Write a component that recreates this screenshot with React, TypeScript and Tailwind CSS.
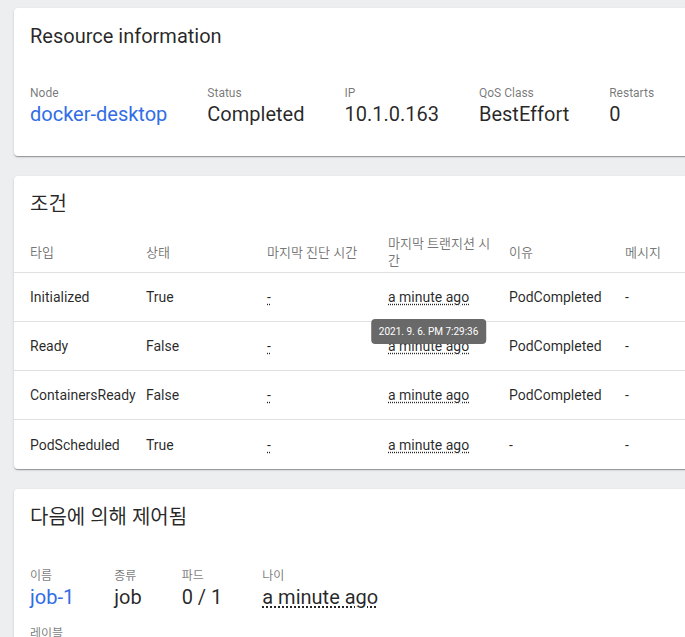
const font = { fontFamily: '"Roboto", "Noto Sans CJK KR", sans-serif' }

interface Condition {
  type: string
  status: string
  reason: string
}

const conditions: Condition[] = [
  { type: 'Initialized', status: 'True', reason: 'PodCompleted' },
  { type: 'Ready', status: 'False', reason: 'PodCompleted' },
  { type: 'ContainersReady', status: 'False', reason: 'PodCompleted' },
  { type: 'PodScheduled', status: 'True', reason: '-' },
]

const cardCls =
  'w-[720px] bg-white rounded-[4px] shadow-[0_2px_1px_-1px_rgba(0,0,0,0.2),0_1px_1px_0_rgba(0,0,0,0.14),0_1px_3px_0_rgba(0,0,0,0.12)]'

function Field({ label, children }: { label: string; children: React.ReactNode }) {
  return (
    <div className="flex flex-col shrink-0">
      <span className="text-[12px] leading-4 text-black/55">{label}</span>
      <span className="text-[20px] leading-[26px] text-black/85">{children}</span>
    </div>
  )
}

function CardTitle({ children }: { children: React.ReactNode }) {
  return <h2 className="text-[20px] leading-8 text-black/85">{children}</h2>
}

export default function App() {
  return (
    <div className="w-[685px] h-[637px] overflow-hidden bg-[#edeef0] pl-[14px] pt-2" style={font}>
      <div className="flex flex-col gap-5">
        {/* Resource information */}
        <div className={`${cardCls} px-4 pt-3 pb-[29px]`}>
          <CardTitle>Resource information</CardTitle>
          <div className="flex gap-10 mt-[33px]">
            <Field label="Node">
              <span className="text-[#326de6]">docker-desktop</span>
            </Field>
            <Field label="Status">Completed</Field>
            <Field label="IP">10.1.0.163</Field>
            <Field label="QoS Class">BestEffort</Field>
            <Field label="Restarts">0</Field>
          </div>
        </div>

        {/* Conditions */}
        <div className={`${cardCls} pt-3 overflow-hidden`}>
          <div className="px-4">
            <CardTitle>조건</CardTitle>
          </div>
          <div className="mt-3 flex h-[41px] items-center border-b border-[#e0e0e0] px-4 text-[13px] leading-[17px] text-black/55">
            <div className="w-[116px] shrink-0">타입</div>
            <div className="w-[121px] shrink-0">상태</div>
            <div className="w-[121px] shrink-0">마지막 진단 시간</div>
            <div className="w-[121px] shrink-0 pr-3">마지막 트랜지션 시간</div>
            <div className="w-[116px] shrink-0">이유</div>
            <div className="w-[116px] shrink-0">메시지</div>
          </div>
          {conditions.map((c, i) => (
            <div
              key={c.type}
              className={`flex h-[49px] items-center px-4 text-[14px] leading-5 text-black/85 ${
                i < conditions.length - 1 ? 'border-b border-[#e0e0e0]' : ''
              }`}
            >
              <div className="w-[116px] shrink-0">{c.type}</div>
              <div className="w-[121px] shrink-0">{c.status}</div>
              <div className="w-[121px] shrink-0">
                <span className="underline decoration-dotted underline-offset-2">-</span>
              </div>
              <div className="w-[121px] shrink-0">
                <span className="relative underline decoration-dotted underline-offset-2">
                  a minute ago
                  {i === 0 && (
                    <span className="absolute left-1/2 top-[30px] z-10 -translate-x-1/2 whitespace-nowrap rounded-[4px] bg-[#616161]/95 px-2 text-[10px] leading-[25px] text-white no-underline">
                      2021. 9. 6. PM 7:29:36
                    </span>
                  )}
                </span>
              </div>
              <div className="w-[116px] shrink-0">{c.reason}</div>
              <div className="w-[116px] shrink-0">-</div>
            </div>
          ))}
        </div>

        {/* Controlled by */}
        <div className={`${cardCls} px-4 pt-3 pb-8`}>
          <CardTitle>다음에 의해 제어됨</CardTitle>
          <div className="flex gap-10 mt-[35px]">
            <Field label="이름">
              <span className="text-[#326de6]">job-1</span>
            </Field>
            <Field label="종류">job</Field>
            <Field label="파드">0 / 1</Field>
            <Field label="나이">
              <span className="underline decoration-dotted underline-offset-2">a minute ago</span>
            </Field>
          </div>
          <div className="mt-[16px] text-[12px] leading-4 text-black/55">레이블</div>
        </div>
      </div>
    </div>
  )
}
